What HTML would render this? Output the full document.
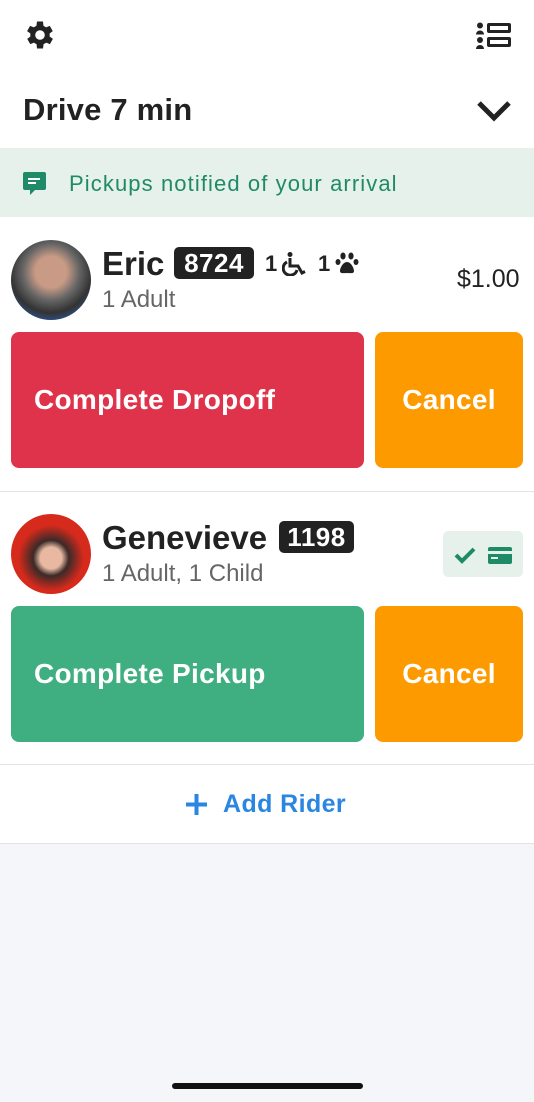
<!DOCTYPE html>
<html><head><meta charset="utf-8"><style>
*{margin:0;padding:0;box-sizing:border-box}
body{width:534px;height:1102px;background:#f5f6fa;font-family:"Liberation Sans",sans-serif;position:relative;overflow:hidden;color:#222}
.white{position:absolute;left:0;top:0;width:534px;height:844px;background:#fff;border-bottom:1px solid #e3e3e3}
.abs{position:absolute;white-space:nowrap}
.btn{position:absolute;border-radius:8px;color:#fff;font-weight:bold;font-size:28px;letter-spacing:0.3px;display:flex;align-items:center}
.badge{position:absolute;background:#222;color:#fff;border-radius:5px;font-weight:bold;font-size:26px;line-height:32px;text-align:center;letter-spacing:0.5px}
.hr{position:absolute;left:0;width:534px;height:1px;background:#e3e3e3}
</style></head><body>
<div class="white"></div>
<svg class="abs" style="left:22px;top:17px" width="36" height="36" viewBox="0 0 24 24"><path fill="#222" fill-rule="evenodd" d="M19.4 13a7.5 7.5 0 0 0 0-2l2.1-1.6-2-3.5-2.5 1a7 7 0 0 0-1.7-1L15 3h-4l-.4 2.9a7 7 0 0 0-1.7 1l-2.5-1-2 3.5L6.6 11a7.5 7.5 0 0 0 0 2l-2.1 1.6 2 3.5 2.5-1a7 7 0 0 0 1.7 1L11 21h4l.4-2.9a7 7 0 0 0 1.7-1l2.5 1 2-3.5zM13 15.2a3.2 3.2 0 1 1 0-6.4 3.2 3.2 0 0 1 0 6.4z" transform="translate(-1 0)"/></svg>
<svg class="abs" style="left:476px;top:22px" width="36" height="27" viewBox="0 0 36 27"><circle cx="4" cy="3.5" r="3" fill="#222"/><path d="M0 12.5a4 4 0 0 1 8 0z" fill="#222"/><circle cx="4" cy="18" r="3" fill="#222"/><path d="M0 27a4 4 0 0 1 8 0z" fill="#222"/><rect x="11" y="1" width="24" height="10" rx="2" fill="#222"/><rect x="14" y="4" width="18" height="4" fill="#fff"/><rect x="11" y="15" width="24" height="10" rx="2" fill="#222"/><rect x="14" y="18" width="18" height="4" fill="#fff"/></svg>
<div class="abs" style="left:23px;top:92px;font-size:31px;font-weight:bold;letter-spacing:0.2px">Drive 7 min</div>
<svg class="abs" style="left:476px;top:100px" width="36" height="22" viewBox="0 0 36 22"><path d="M3 3l15 15L33 3" stroke="#222" stroke-width="5" fill="none"/></svg>
<div class="abs" style="left:0;top:148px;width:534px;height:69px;background:#e6f1ec"></div>
<svg class="abs" style="left:23px;top:172px" width="23" height="23" viewBox="0 0 23 23"><path d="M2 0h19a2 2 0 0 1 2 2v14a2 2 0 0 1-2 2H12l-5 5v-5H2a2 2 0 0 1-2-2V2a2 2 0 0 1 2-2z" fill="#1f8a67"/><rect x="5" y="6" width="12" height="2" fill="#fff"/><rect x="5" y="10" width="8" height="2" fill="#fff"/></svg>
<div class="abs" style="left:69px;top:171px;font-size:22px;letter-spacing:1.1px;color:#1f8a67">Pickups notified of your arrival</div>
<div class="abs" style="left:11px;top:240px;width:80px;height:80px;border-radius:50%;background:radial-gradient(circle at 50% 40%,#c99a85 0 25%,#666 45%,#333 65%,#2a5aa0 85%)"></div>
<div class="abs" style="left:102px;top:245px;font-size:33px;font-weight:bold">Eric</div>
<div class="badge" style="left:174px;top:247px;width:80px">8724</div>
<div class="abs" style="left:265px;top:251px;font-size:22px;font-weight:bold">1</div>
<svg class="abs" style="left:282px;top:252px" width="26" height="24" viewBox="0 0 26 24"><circle cx="8" cy="2.5" r="2.5" fill="#222"/><path d="M8 6v8h8l4 7 3-1.5" stroke="#222" stroke-width="3" fill="none"/><path d="M5 10a7 7 0 1 0 10 8" stroke="#222" stroke-width="3" fill="none"/></svg>
<div class="abs" style="left:318px;top:251px;font-size:22px;font-weight:bold">1</div>
<svg class="abs" style="left:335px;top:252px" width="24" height="22" viewBox="0 0 24 22"><ellipse cx="8" cy="4" rx="2.6" ry="3.5" fill="#222"/><ellipse cx="16" cy="4" rx="2.6" ry="3.5" fill="#222"/><ellipse cx="3" cy="10" rx="2.5" ry="3" fill="#222"/><ellipse cx="21" cy="10" rx="2.5" ry="3" fill="#222"/><path d="M12 10c-4 0-7 6-7 9s4 2 7 2 7 1 7-2-3-9-7-9z" fill="#222"/></svg>
<div class="abs" style="left:102px;top:286px;font-size:24px;color:#666">1 Adult</div>
<div class="abs" style="left:457px;top:265px;font-size:25px">$1.00</div>
<div class="btn" style="left:11px;top:332px;width:353px;height:136px;background:#de334a;padding-left:23px">Complete Dropoff</div>
<div class="btn" style="left:375px;top:332px;width:148px;height:136px;background:#fd9a00;justify-content:center">Cancel</div>
<div class="hr" style="top:491px"></div>
<div class="abs" style="left:11px;top:514px;width:80px;height:80px;border-radius:50%;background:radial-gradient(circle at 50% 55%,#e8b9a0 0 18%,#3a2a28 30%,#d62a1c 55%)"></div>
<div class="abs" style="left:102px;top:519px;font-size:33px;font-weight:bold">Genevieve</div>
<div class="badge" style="left:279px;top:521px;width:75px">1198</div>
<div class="abs" style="left:102px;top:560px;font-size:24px;color:#666">1 Adult, 1 Child</div>
<div class="abs" style="left:443px;top:531px;width:80px;height:46px;background:#e6f1ec;border-radius:5px"></div>
<svg class="abs" style="left:454px;top:545px" width="60" height="20" viewBox="0 0 60 20"><path d="M2 10l6 6L20 4" stroke="#1f8a67" stroke-width="4" fill="none"/><rect x="34" y="2" width="24" height="17" rx="2" fill="#1f8a67"/><rect x="34" y="6" width="24" height="3" fill="#e6f1ec"/><rect x="37" y="12" width="7" height="2" fill="#e6f1ec"/></svg>
<div class="btn" style="left:11px;top:606px;width:353px;height:136px;background:#3fae80;padding-left:23px">Complete Pickup</div>
<div class="btn" style="left:375px;top:606px;width:148px;height:136px;background:#fd9a00;justify-content:center">Cancel</div>
<div class="hr" style="top:764px"></div>
<svg class="abs" style="left:185px;top:793px" width="23" height="23" viewBox="0 0 23 23"><path d="M11.5 1v21M1 11.5h21" stroke="#2a86e0" stroke-width="4"/></svg>
<div class="abs" style="left:223px;top:790px;font-size:25px;font-weight:bold;letter-spacing:0.4px;color:#2a86e0">Add Rider</div>
<div class="abs" style="left:172px;top:1083px;width:191px;height:6px;border-radius:3px;background:#111"></div>
</body></html>
